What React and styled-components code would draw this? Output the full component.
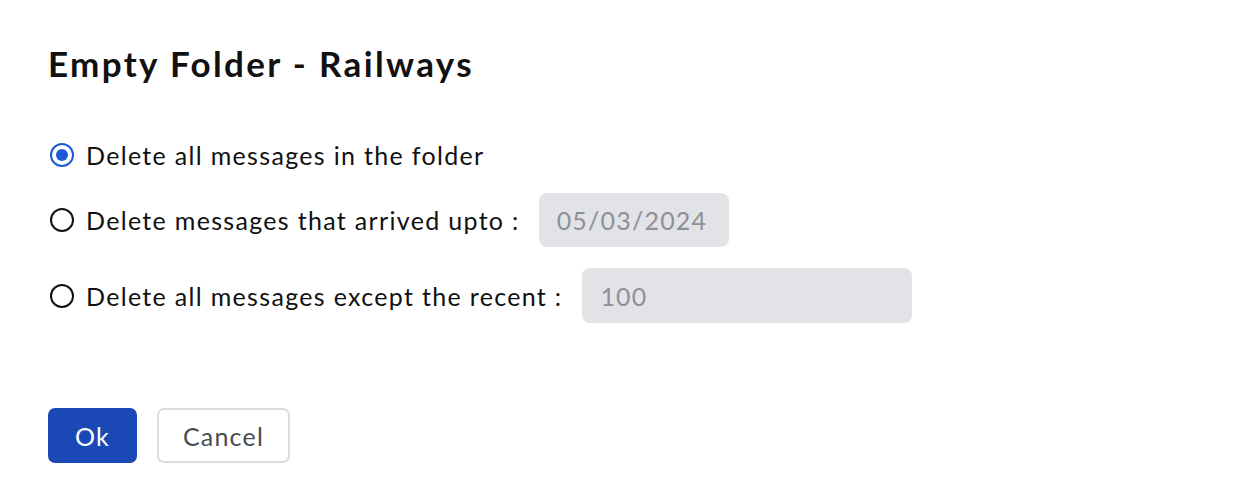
import React, { useState } from 'react';
import styled, { createGlobalStyle } from 'styled-components';

const GlobalStyle = createGlobalStyle`
  body {
    margin: 0;
    background: #ffffff;
    font-family: Lato, "Noto Sans", sans-serif;
    color: #111111;
  }
`;

const Dialog = styled.div`
  padding: 44px 48px;
  display: flex;
  flex-direction: column;
`;

const Title = styled.h1`
  margin: 0 0 46px;
  font-size: 35px;
  font-weight: 700;
  line-height: 38px;
  letter-spacing: 2.35px;
  color: #111111;
`;

const Options = styled.div`
  display: flex;
  flex-direction: column;
`;

const Row = styled.label`
  display: flex;
  align-items: center;
  min-height: 54px;
  margin-bottom: ${(p) => p.gap || 0}px;
  font-size: 25px;
  letter-spacing: 1.32px;
  cursor: pointer;
`;

const Radio = styled.span`
  width: 24px;
  height: 24px;
  box-sizing: border-box;
  border-radius: 50%;
  border: 2px solid ${(p) => (p.checked ? '#1e5ad8' : '#111111')};
  display: flex;
  align-items: center;
  justify-content: center;
  margin-left: 2px;
  margin-right: 12px;
  flex-shrink: 0;

  &::after {
    content: '';
    width: 12px;
    height: 12px;
    border-radius: 50%;
    background: #1e5ad8;
    display: ${(p) => (p.checked ? 'block' : 'none')};
  }
`;

const Field = styled.input`
  margin-left: ${(p) => p.offset}px;
  width: ${(p) => p.w}px;
  height: ${(p) => p.h || 54}px;
  box-sizing: border-box;
  border: none;
  border-radius: 8px;
  background: #e2e3e6;
  padding: 0 18px;
  font-family: Lato, sans-serif;
  font-size: 25px;
  letter-spacing: 1.2px;
  color: #8e9096;
  outline: none;
`;

const Actions = styled.div`
  display: flex;
  gap: 20px;
  margin-top: 85px;
`;

const Button = styled.button`
  height: 55px;
  box-sizing: border-box;
  padding: 0 ${(p) => (p.primary ? 25 : 24)}px;
  border-radius: 7px;
  border: 2px solid ${(p) => (p.primary ? '#1a49b5' : '#dcdcdc')};
  background: ${(p) => (p.primary ? '#1a49b5' : '#ffffff')};
  color: ${(p) => (p.primary ? '#ffffff' : '#4a4c52')};
  font-family: Lato, sans-serif;
  font-size: 25px;
  letter-spacing: 1.2px;
  cursor: pointer;
`;

export default function App() {
  const [mode, setMode] = useState(0);
  return (
    <>
      <GlobalStyle />
      <Dialog>
        <Title>Empty Folder - Railways</Title>
        <Options>
          <Row gap={11} onClick={() => setMode(0)}>
            <Radio checked={mode === 0} />
            Delete all messages in the folder
          </Row>
          <Row gap={21} onClick={() => setMode(1)}>
            <Radio checked={mode === 1} />
            Delete messages that arrived upto :
            <Field offset={19} w={190} defaultValue="05/03/2024" disabled={mode !== 1} />
          </Row>
          <Row onClick={() => setMode(2)}>
            <Radio checked={mode === 2} />
            Delete all messages except the recent :
            <Field offset={20} w={330} h={55} defaultValue="100" disabled={mode !== 2} />
          </Row>
        </Options>
        <Actions>
          <Button primary>Ok</Button>
          <Button>Cancel</Button>
        </Actions>
      </Dialog>
    </>
  );
}
